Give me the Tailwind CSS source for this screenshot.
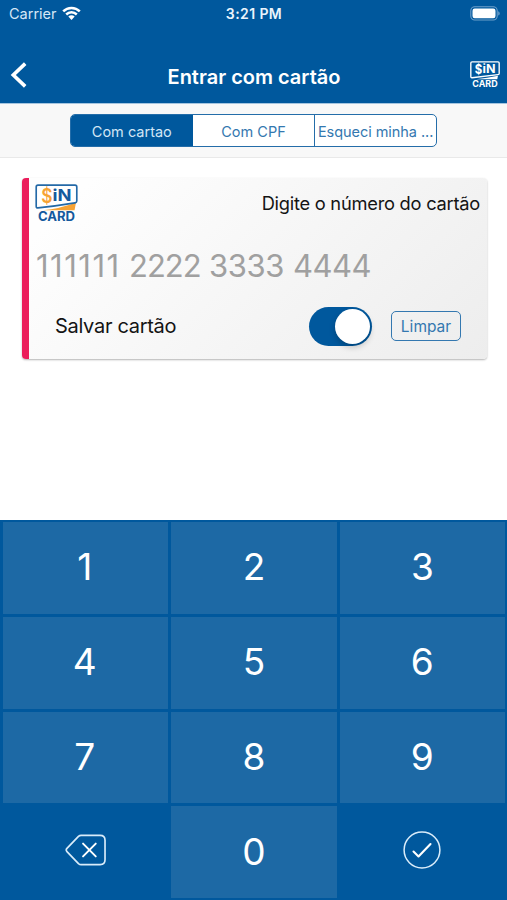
<!DOCTYPE html>
<html lang="pt-BR">
<head>
<meta charset="utf-8">
<meta name="viewport" content="width=device-width">
<title>Entrar com cartão</title>
<script src="https://cdn.jsdelivr.net/npm/@tailwindcss/browser@4"></script>
</head>
<body class="bg-white">
<div class="w-[507px] h-[900px] flex flex-col overflow-hidden bg-white font-['Inter',sans-serif] whitespace-nowrap">
  <header class="h-[103px] shrink-0 bg-[#00589d] text-white flex flex-col">
    <div class="h-7 grid grid-cols-3 items-center pl-[8px] pr-[7px]">
      <div class="flex items-center gap-[6px] text-[14.5px] text-[#d5e7f6] pl-px"><span>Carrier</span>
        <svg class="w-[19px] h-[15px] -mt-[2px] -ml-px" viewBox="0 0 19 15" fill="none" stroke="#fff" stroke-width="2.5"><path d="M1.2 5.4C5.8.8 13.2.8 17.8 5.4M4.2 8.5c3-2.9 7.6-2.9 10.6 0"/><path d="M6.3 10.6c1.8-1.7 4.6-1.7 6.4 0L9.5 13.9z" fill="#fff" stroke="none"/></svg>
      </div>
      <div class="text-center text-[14px] font-semibold tracking-[0.4px] text-[#eaf4fc] -mt-px">3:21 PM</div>
      <svg class="justify-self-end w-[30px] h-[15px] -mt-[2px]" viewBox="0 0 30 15"><rect x=".8" y=".8" width="26.4" height="13.2" rx="4" fill="none" stroke="#6d9fca" stroke-width="1.1"/><rect x="2.5" y="2.5" width="23" height="9.8" rx="2.2" fill="#fff"/><path d="M28.2 5.2q1.5.5 1.5 2.2t-1.5 2.2z" fill="#6d9fca"/></svg>
    </div>
    <div class="flex-1 grid grid-cols-[60px_1fr_60px] items-center pt-[20px]">
      <svg class="ml-[10px] w-[18px] h-[26px] mb-[1px]" viewBox="0 0 18 26" fill="none" stroke="#fff" stroke-width="3.6"><path d="M15.2 1.6 3.3 13l11.9 11.4"/></svg>
      <h1 class="text-center text-[20px] leading-6 font-semibold pt-[2px] pl-px">Entrar com cartão</h1>
      <svg class="justify-self-end mr-[7px] -mt-px w-[30px] h-[28px]" viewBox="0 0 44 41" font-family="Inter" font-weight="700" fill="#fff"><path d="M3 1.2h38q1.8 0 1.8 1.8v15.2q0 1.6-1.8 1.8L3 24.5q-1.8.2-1.8-1.8V3q0-1.8 1.8-1.8Z" fill="none" stroke="#fff" stroke-width="2"/><path d="M9 26.6q16-1.8 32-5.1l-1 5.1Z"/><text x="7" y="19.5" font-size="19.5" textLength="11" lengthAdjust="spacingAndGlyphs">$</text><text x="18.5" y="17.8" font-size="18" textLength="19" lengthAdjust="spacingAndGlyphs">iN</text><text x="3.5" y="38" font-size="13" textLength="37" lengthAdjust="spacingAndGlyphs">CARD</text></svg>
    </div>
  </header>
  <nav class="h-[55px] shrink-0 bg-[#f8f8f8] border-t border-t-[#a5c5df] border-b border-b-[#e9e9e9] flex justify-center">
    <div class="mt-[10px] w-[367px] h-[33px] border-[1.5px] border-[#246da9] rounded-[5px] overflow-hidden bg-white grid grid-cols-3 text-[14.5px] text-[#3478b0] leading-[33px] text-center">
      <div class="bg-[#00589d] text-[#d2e6f5]">Com cartao</div>
      <div>Com CPF</div>
      <div class="border-l border-[#246da9] tracking-[-0.05px]">Esqueci minha ...</div>
    </div>
  </nav>
  <main class="flex-1 pt-5 px-5 pl-[22px]">
    <section class="h-[181px] rounded-[4px] border-l-[7px] border-[#eb1d5b] bg-linear-135 from-[#fefefe] from-10% to-[#ededed] shadow-[0_1px_2px_rgba(0,0,0,0.3)] flex flex-col text-[#141414]">
      <div class="h-[62px] flex justify-between items-start pl-[6px] pr-[7px] pt-[6px]">
        <svg class="w-[43px] h-[40px]" viewBox="0 0 44 41" font-family="Inter" font-weight="700" fill="#15599d"><path d="M8 26.9q17-1.5 34-8l-1.5 8Z" fill="#f7a334"/><path d="M3 1.2h38q1.8 0 1.8 1.8v14.4q0 1.6-1.8 1.9Q22 22.4 3 24.5q-1.8.2-1.8-1.8V3q0-1.8 1.8-1.8Z" fill="#fff" stroke="#2469a7" stroke-width="1.7"/><text x="6.5" y="19.6" font-size="20.5" font-weight="600" fill="#f7a334" textLength="11.5" lengthAdjust="spacingAndGlyphs">$</text><text x="18" y="17.2" font-size="17" textLength="19.5" lengthAdjust="spacingAndGlyphs">iN</text><text x="3" y="38" font-size="13" textLength="38" lengthAdjust="spacingAndGlyphs">CARD</text></svg>
        <p class="text-[18.3px] leading-[38px] tracking-[-0.25px]">Digite o número do cartão</p>
      </div>
      <div class="h-[53px] pl-[7px] text-[31px] leading-[52px] text-[#a0a0a0] flex"><span class="w-[93px] tracking-[1.5px]">111111</span><span class="w-[80px] tracking-[-1px]">2222</span><span class="w-[84px] tracking-[-0.4px]">3333</span><span class="tracking-[-0.5px]">4444</span></div>
      <div class="h-[66px] flex items-center pl-[26px] pr-[26px]">
        <span class="text-[20px] flex-1 tracking-[-0.3px]">Salvar cartão</span>
        <div class="w-[63px] h-[39px] rounded-full bg-[#00589d] p-[2px] flex justify-end"><div class="size-[35px] rounded-full bg-white shadow-[0_3px_6px_rgba(0,0,0,0.22)]"></div></div>
        <button class="-mt-px ml-[19px] w-[70px] h-[30px] border-[1.5px] border-[#3478b0] rounded-[5px] text-[#3478b0] text-[15.5px] leading-none pt-[2px]">Limpar</button>
      </div>
    </section>
  </main>
  <div class="h-[380px] shrink-0 bg-[#00589d] pt-[2px] pb-[2px] pl-[3px] pr-[2px] grid grid-cols-3 grid-rows-4 gap-x-[3px] gap-y-[3px] text-[37px] leading-none text-white text-center *:flex *:items-center *:justify-center">
    <div class="bg-[#1d69a5] pb-[2px] pr-[2px]">1</div><div class="bg-[#1d69a5] pb-[2px]">2</div><div class="bg-[#1d69a5] pb-[2px]">3</div>
    <div class="bg-[#1d69a5] pb-[2px] pr-[2px]">4</div><div class="bg-[#1d69a5] pb-[2px]">5</div><div class="bg-[#1d69a5] pb-[2px]">6</div>
    <div class="bg-[#1d69a5] pb-[2px] pr-[2px]">7</div><div class="bg-[#1d69a5] pb-[2px]">8</div><div class="bg-[#1d69a5] pb-[2px]">9</div>
    <div><svg class="w-[41px] h-[32px] -mt-[5px]" viewBox="0 0 42 32" fill="none" stroke="#d9ecfa" stroke-width="1.7" stroke-linejoin="round" stroke-linecap="round"><path d="M16.5 1H36q5 0 5 5v20q0 5-5 5H16.5q-1.5 0-2.7-1.1L2 17.6q-1.5-1.6 0-3.2L13.8 2.1Q15 1 16.5 1Z"/><path stroke="#fff" stroke-width="2" d="m18.5 9.5 13 13m0-13-13 13"/></svg></div>
    <div class="bg-[#1d69a5] pb-px">0</div>
    <div><svg class="size-[38px] -mt-[5px]" viewBox="0 0 38 38" fill="none" stroke="#d9ecfa" stroke-width="1.5" stroke-linecap="round" stroke-linejoin="round"><circle cx="19" cy="19" r="17.9"/><path stroke="#fff" stroke-width="2.1" d="m10.5 20.5 5 5L27.5 13"/></svg></div>
  </div>
</div>
</body>
</html>
